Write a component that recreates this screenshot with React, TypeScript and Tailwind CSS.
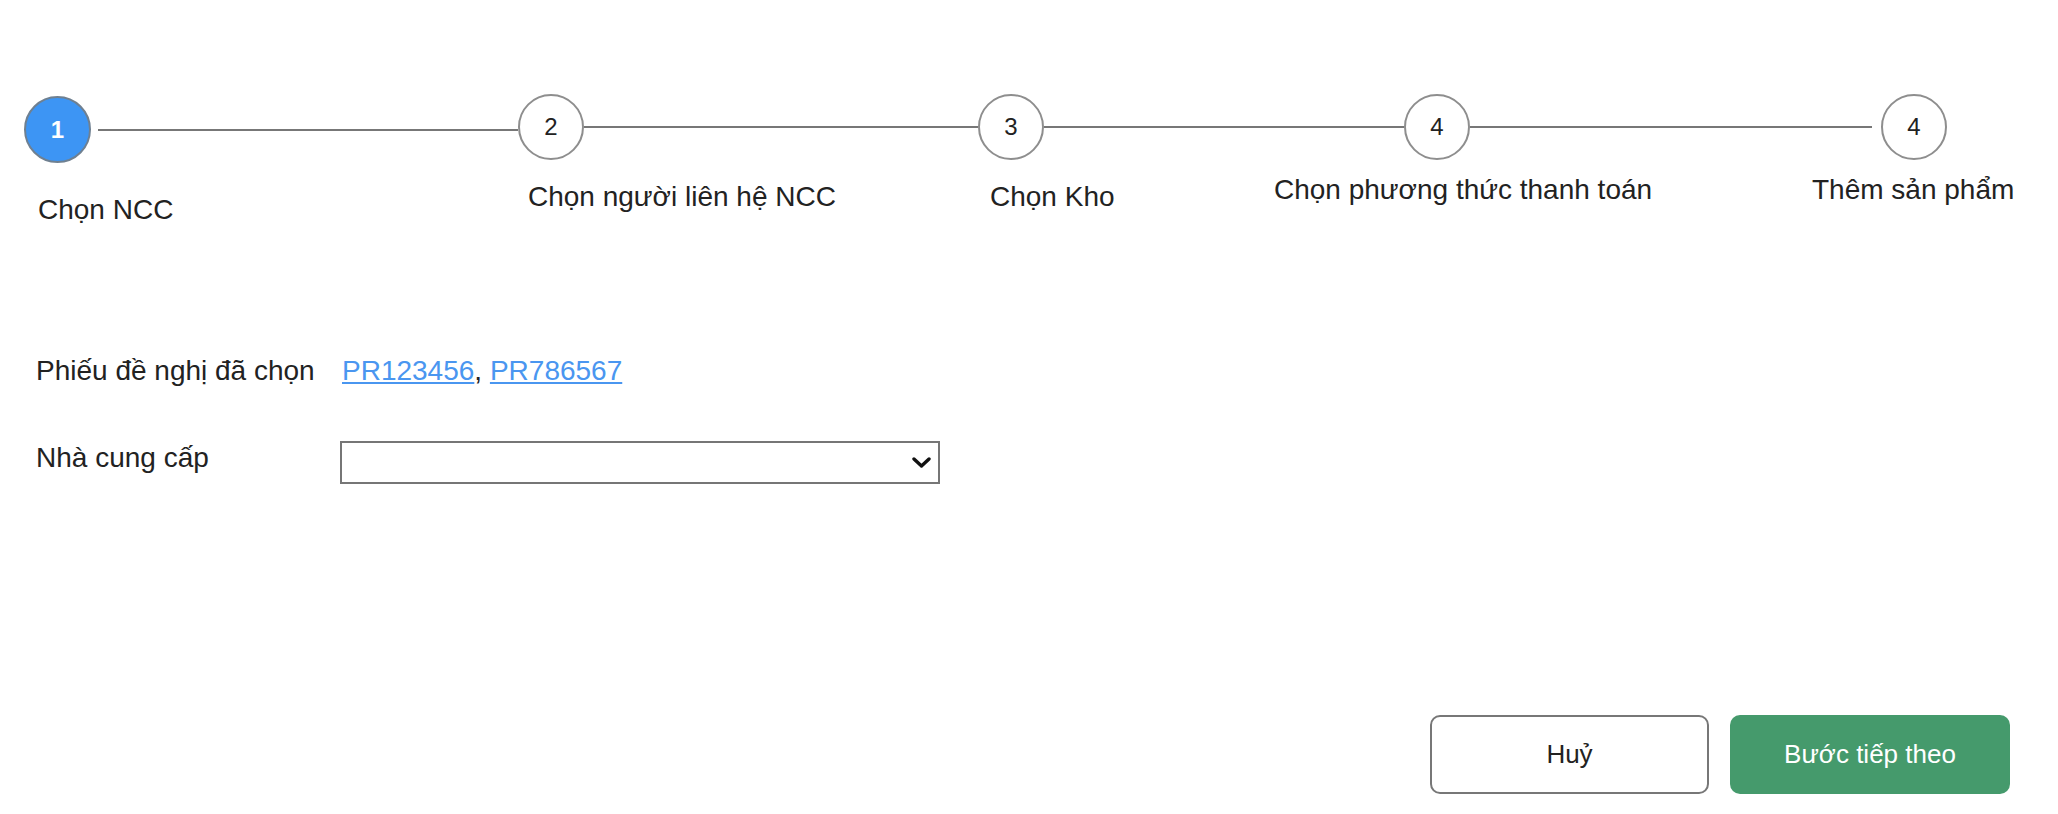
const steps = [
  { n: '1', label: 'Chọn NCC', labelBox: 'w-[490px] mt-[31px]' },
  { n: '2', label: 'Chọn người liên hệ NCC', labelBox: 'w-[462px] mt-[18px]' },
  { n: '3', label: 'Chọn Kho', labelBox: 'w-[284px] mt-[18px]' },
  { n: '4', label: 'Chọn phương thức thanh toán', labelBox: 'w-[538px] mt-[11px]' },
  { n: '4', label: 'Thêm sản phẩm', labelBox: 'mt-[11px]' },
]

function Circle({ n, active }: { n: string; active?: boolean }) {
  if (active) {
    return (
      <div className="mt-[2px] flex h-[67px] w-[67px] shrink-0 items-center justify-center rounded-full border-2 border-[#6f8091] bg-[#3d95f4] text-[24px] font-bold text-white">
        {n}
      </div>
    )
  }
  return (
    <div className="flex h-[66px] w-[66px] shrink-0 items-center justify-center rounded-full border-2 border-[#8e8e8e] bg-white text-[24px] text-[#222]">
      {n}
    </div>
  )
}

function Stepper() {
  return (
    <div>
      <div className="flex items-start pl-[24px]">
        <Circle n="1" active />
        <div className="ml-[7px] mt-[35px] h-[2px] w-[420px] bg-[#777]" />
        <Circle n="2" />
        <div className="mt-[32px] h-[2px] w-[394px] bg-[#777]" />
        <Circle n="3" />
        <div className="mt-[32px] h-[2px] w-[360px] bg-[#777]" />
        <Circle n="4" />
        <div className="mt-[32px] h-[2px] w-[402px] bg-[#777]" />
        <div className="ml-[9px]">
          <Circle n="4" />
        </div>
      </div>
      <div className="flex items-start pl-[38px]">
        {steps.map((s, i) => (
          <div key={i} className={`shrink-0 whitespace-nowrap text-[28px] leading-[32px] ${s.labelBox}`}>
            {s.label}
          </div>
        ))}
      </div>
    </div>
  )
}

export default function App() {
  return (
    <div className="min-h-[814px] w-full bg-white pt-[94px] font-['Liberation_Sans',Arial,sans-serif] text-[#222]">
      <Stepper />

      <div className="mt-[129px] flex items-start pl-[36px] text-[28px] leading-[32px]">
        <div className="w-[306px] shrink-0">Phiếu đề nghị đã chọn</div>
        <div>
          <a href="#" className="text-[#4a96f0] underline">
            PR123456
          </a>
          ,{' '}
          <a href="#" className="text-[#4a96f0] underline">
            PR786567
          </a>
        </div>
      </div>

      <div className="mt-[54px] flex items-start pl-[36px] text-[28px] leading-[32px]">
        <div className="w-[304px] shrink-0 pt-[1px]">Nhà cung cấp</div>
        <div className="relative h-[43px] w-[600px]">
          <select className="h-full w-full appearance-none border-2 border-[#767676] bg-white px-2 text-[24px] outline-none">
            <option value=""></option>
          </select>
          <svg
            className="pointer-events-none absolute right-[9px] top-[16px]"
            width="19"
            height="11"
            viewBox="0 0 19 11"
            fill="none"
          >
            <path d="M2 2l7.5 7 7.5-7" stroke="#111" strokeWidth="3.4" strokeLinecap="round" strokeLinejoin="round" />
          </svg>
        </div>
      </div>

      <div className="mt-[231px] flex justify-end gap-[21px] pr-[48px] text-[26px]">
        <button
          type="button"
          className="flex h-[79px] w-[279px] items-center justify-center rounded-[10px] border-2 border-[#777] bg-white text-[#222]"
        >
          Huỷ
        </button>
        <button
          type="button"
          className="flex h-[79px] w-[280px] items-center justify-center rounded-[10px] bg-[#459a6c] text-white"
        >
          Bước tiếp theo
        </button>
      </div>
    </div>
  )
}
